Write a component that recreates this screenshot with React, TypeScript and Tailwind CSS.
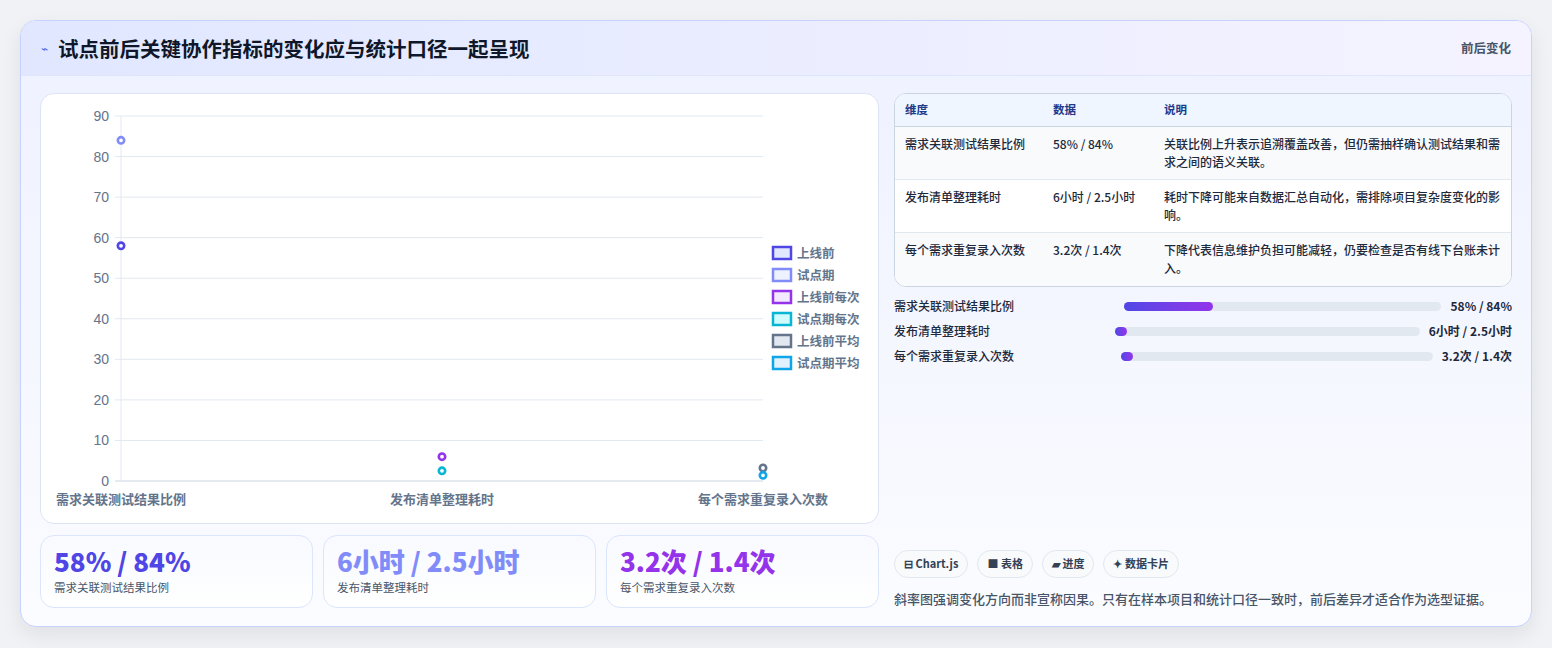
import React from "react";

const F = { fontFamily: '"Noto Sans CJK SC", "Noto Sans", sans-serif' };

function Chart() {
  const x0 = 80, x1 = 722, yTop = 22, yBot = 387;
  const y = (v: number) => yBot - (v / 90) * (yBot - yTop);
  const cx = [x0, (x0 + x1) / 2, x1];
  const pts = [
    { c: 0, v: 58, col: "#4f46e5" },
    { c: 0, v: 84, col: "#818cf8" },
    { c: 1, v: 6, col: "#9333ea" },
    { c: 1, v: 2.5, col: "#06b6d4" },
    { c: 2, v: 3.2, col: "#64748b" },
    { c: 2, v: 1.4, col: "#0ea5e9" },
  ];
  const legend = [
    ["上线前", "#4f46e5", "#e0e7ff"],
    ["试点期", "#818cf8", "#eef2ff"],
    ["上线前每次", "#9333ea", "#f3e8ff"],
    ["试点期每次", "#06b6d4", "#cffafe"],
    ["上线前平均", "#64748b", "#e2e8f0"],
    ["试点期平均", "#0ea5e9", "#e0f2fe"],
  ];
  const labels = ["需求关联测试结果比例", "发布清单整理耗时", "每个需求重复录入次数"];
  return (
    <svg width="838" height="428" style={F}>
      {[0, 10, 20, 30, 40, 50, 60, 70, 80, 90].map((t) => (
        <g key={t}>
          <line x1={x0 - 6} x2={x1} y1={y(t)} y2={y(t)} stroke={t === 0 ? "#cbd5e1" : "#e2e8f0"} />
          <text x={x0 - 12} y={y(t) + 5} textAnchor="end" fontSize="14" fill="#64748b" fontFamily="Liberation Sans, sans-serif">{t}</text>
        </g>
      ))}
      <line x1={x0} x2={x0} y1={yTop} y2={yBot} stroke="#e2e8f0" />
      {labels.map((l, i) => (
        <text key={l} x={cx[i]} y={yBot + 23} textAnchor="middle" fontSize="13" fontWeight="600" fill="#64748b">{l}</text>
      ))}
      {pts.map((p, i) => (
        <circle key={i} cx={cx[p.c]} cy={y(p.v)} r="3.2" fill="#fff" stroke={p.col} strokeWidth="2.6" />
      ))}
      {legend.map(([n, b, f], i) => (
        <g key={n} transform={`translate(731, ${152 + i * 22})`}>
          <rect x="1" y="1" width="18" height="12" fill={f} stroke={b} strokeWidth="2.5" />
          <text x="25" y="12" fontSize="12.5" fontWeight="600" fill="#64748b">{n}</text>
        </g>
      ))}
    </svg>
  );
}

export default function App() {
  const rows = [
    ["需求关联测试结果比例", "58% / 84%", "关联比例上升表示追溯覆盖改善，但仍需抽样确认测试结果和需求之间的语义关联。"],
    ["发布清单整理耗时", "6小时 / 2.5小时", "耗时下降可能来自数据汇总自动化，需排除项目复杂度变化的影响。"],
    ["每个需求重复录入次数", "3.2次 / 1.4次", "下降代表信息维护负担可能减轻，仍要检查是否有线下台账未计入。"],
  ];
  const bars = [
    ["需求关联测试结果比例", "58% / 84%", 28, "ml-[6px]"],
    ["发布清单整理耗时", "6小时 / 2.5小时", 4, "ml-[-3px]"],
    ["每个需求重复录入次数", "3.2次 / 1.4次", 4, "ml-[3px]"],
  ];
  return (
    <div className="w-[1552px] h-[648px] bg-[#f1f2f5] pt-[20px] pl-[20px]" style={F}>
      <div className="w-[1512px] h-[607px] rounded-[16px] border border-[#c7d2fe] overflow-hidden bg-gradient-to-b from-[#eef1ff] to-[#fbfcff] shadow-[0_8px_20px_rgba(15,23,42,0.08)] flex flex-col">
        <div className="h-[55px] shrink-0 flex items-center justify-between px-[20px] bg-gradient-to-r from-[#e0e7ff] to-[#f5f3ff] border-b border-[#dfe5fb]">
          <div className="flex items-center gap-[10px]">
            <span className="text-[12px] text-[#4f6ee5]">⌁</span>
            <h1 className="text-[20.5px] font-bold text-[#0f172a]">试点前后关键协作指标的变化应与统计口径一起呈现</h1>
          </div>
          <span className="text-[12.5px] font-bold text-[#475569]">前后变化</span>
        </div>
        <div className="flex-1 flex gap-[15px] pt-[17px] pb-[18px] px-[19px]">
          <div className="w-[839px] flex flex-col gap-[11px]">
            <div className="h-[431px] rounded-[14px] bg-white border border-[#dbe3f4] overflow-hidden">
              <Chart />
            </div>
            <div className="grid grid-cols-3 gap-[10px] h-[73px]">
              {[
                ["58% / 84%", "需求关联测试结果比例", "text-[#4f46e5]"],
                ["6小时 / 2.5小时", "发布清单整理耗时", "text-[#818cf8]"],
                ["3.2次 / 1.4次", "每个需求重复录入次数", "text-[#9333ea]"],
              ].map(([v, l, c]) => (
                <div key={l} className="rounded-[14px] border border-[#dbe5fb] bg-gradient-to-b from-[#f8faff] to-white px-[13px] pt-[9px]">
                  <div className={`text-[26px] font-extrabold leading-[32px] ${c}`}>{v}</div>
                  <div className="text-[11.5px] text-[#475569] mt-[2px]">{l}</div>
                </div>
              ))}
            </div>
          </div>
          <div className="w-[619px] flex flex-col">
            <div className="rounded-[12px] border border-[#cbd5e1] overflow-hidden bg-white">
              <div className="grid grid-cols-[148px_111px_1fr] h-[33px] items-center bg-[#eff6ff] border-b border-[#cbd5e1] px-[10px] text-[11.5px] font-bold text-[#1e3a8a]">
                <div>维度</div><div>数据</div><div>说明</div>
              </div>
              {rows.map((r, i) => (
                <div key={i} className={`grid grid-cols-[148px_111px_1fr] px-[10px] pt-[8px] h-[53px] text-[12px] leading-[18px] text-[#1e293b] font-medium ${i < 2 ? "border-b border-[#e2e8f0]" : ""} ${i % 2 === 0 ? "bg-[#f8fafc]" : "bg-white"}`}>
                  <div>{r[0]}</div><div>{r[1]}</div><div>{r[2]}</div>
                </div>
              ))}
            </div>
            <div className="flex flex-col gap-[7px] mt-[10px]">
              {bars.map(([l, v, w, m]) => (
                <div key={l as string} className="flex items-center h-[18px] text-[12px]">
                  <div className="w-[224px] shrink-0 text-[#1e293b] font-medium">{l}</div>
                  <div className={`flex-1 h-[9px] rounded-full bg-[#e2e8f0] ${m}`}>
                    <div className="h-full rounded-full bg-gradient-to-r from-[#4f46e5] to-[#9333ea] min-w-[11px]" style={{ width: `${w}%` }} />
                  </div>
                  <div className="ml-[9px] font-bold text-[#1e293b]">{v}</div>
                </div>
              ))}
            </div>
            <div className="mt-auto flex gap-[9px]">
              {["⊟ Chart.js", "■ 表格", "▰ 进度", "✦ 数据卡片"].map((c) => (
                <span key={c} className="h-[28px] px-[9px] flex items-center rounded-full border border-[#e2e8f0] bg-[#f8fafc] text-[11px] font-bold text-[#334155]">{c}</span>
              ))}
            </div>
            <p className="mt-[11px] text-[13px] text-[#475569] font-medium">斜率图强调变化方向而非宣称因果。只有在样本项目和统计口径一致时，前后差异才适合作为选型证据。</p>
          </div>
        </div>
      </div>
    </div>
  );
}
